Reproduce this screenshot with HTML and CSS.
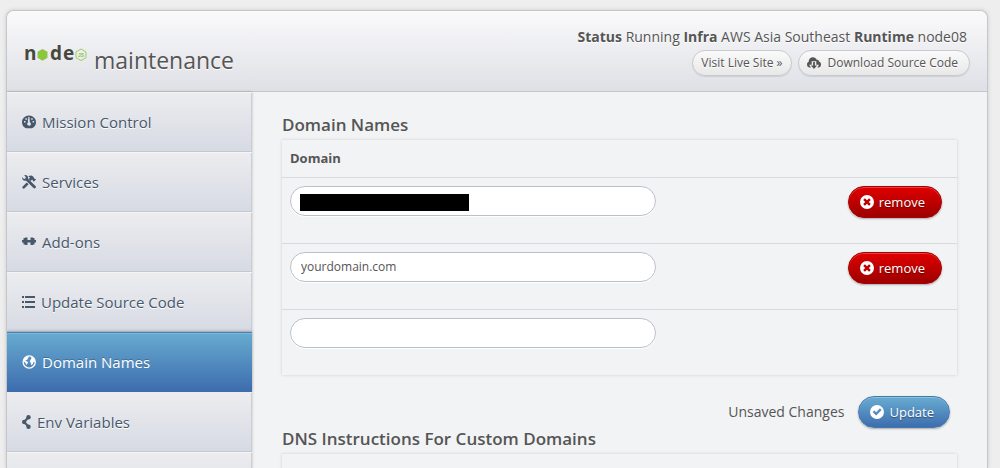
FILE: index.html
```html
<!DOCTYPE html>
<html lang="en">
<head>
<meta charset="utf-8">
<title>maintenance – Domain Names</title>
<link rel="stylesheet" href="styles.css">
</head>
<body>
<svg class="defs" aria-hidden="true">
  <symbol id="i-remove" viewBox="0 0 14 14"><path fill-rule="evenodd" d="M7 0a7 7 0 1 0 0 14A7 7 0 0 0 7 0zM4.9 3.2 7 5.2l2.1-2 1.7 1.7L8.800 7l2 2.100-1.700 1.700L7 8.800l-2.100 2-1.700-1.700L5.200 7l-2-2.100z"/></symbol>
  <symbol id="i-check" viewBox="0 0 14 14"><path fill-rule="evenodd" d="M7 0a7 7 0 1 0 0 14A7 7 0 0 0 7 0zM9.900 3.300l1.700 1.700-5.400 5.600L2.600 7.100l1.700-1.700 1.900 1.800z"/></symbol>
</svg>
<div class="panel">
  <header class="header">
    <div class="brand">
      <svg class="logo" viewBox="0 0 64 28" role="img" aria-label="node.js">
        <g class="logo-word"><text x="0" y="19">n</text><text x="26" y="19">d</text><text x="39" y="19">e</text></g>
        <path fill="#8cc63f" d="M18.500 8l5 2.800v6l-5 2.900-5-2.900v-6z"/>
        <path fill="none" stroke="#9bcf5c" d="M57 8l5 2.900v5.800l-5 2.900-5-2.900v-5.800z"/>
        <text class="logo-js" x="54" y="16">JS</text>
      </svg>
      <h1 class="title">maintenance</h1>
    </div>
    <div class="info">
      <p class="status"><b>Status</b> Running <b>Infra</b> AWS Asia Southeast <b>Runtime</b> node08</p>
      <div class="links">
        <a class="pill" href="#">Visit Live Site »</a>
        <a class="pill pill-icon" href="#">
          <svg class="cloud" viewBox="0 0 14 12"><path fill-rule="evenodd" d="M3 10.500C1.200 10.500 0 9.200 0 7.500c0-1.300.7-2.300 1.700-2.700C1.600 2 3.500.3 5.900.3c1.900 0 3.200 1 3.800 2.500 1.300-.3 2.300.6 2.300 1.700 1.200.3 2 1.500 2 2.900 0 1.700-1.100 3.100-2.700 3.100h-.9L12 7.700H9.300V4.200H4.700v3.500H2l2.100 2.800z"/><path d="M6.100 5h1.800v3.500h2.200L7 12 3.900 8.500h2.200z"/></svg>
          Download Source Code</a>
      </div>
    </div>
  </header>
  <div class="body">
    <nav class="nav">
      <a class="item" href="#"><svg class="icon" viewBox="0 0 14 14"><path fill-rule="evenodd" d="M7 .5C3.100.5 0 3.500 0 7.200c0 2.500 1.200 4.400 3 5.600.4.300.7.400 1.200.4h5.600c.5 0 .8-.1 1.200-.4 1.800-1.200 3-3.100 3-5.600C14 3.500 10.900.5 7 .5zM2 6h1.500v1.500H2zm1.400-2.700h1.500v1.500H3.400zM6.300 2h1.200l.3 5.300c1 .4 1.400 1.300 1.100 2.200-.5 1.600-2.900 1.700-3.600.1-.4-1 0-1.900.9-2.300L5.700 4.500l.6-.3zM9.200 3.300h1.500v1.500H9.200zM10.600 6h1.500v1.500h-1.500z"/></svg>Mission Control</a>
      <a class="item" href="#"><svg class="icon" viewBox="0 0 14 14"><path d="M.2 2.200 2 3.900l1.500-.3.300-1.500L2.200.3c1.800-.6 3.900.3 4 2.700l-.1.700 7.400 7.300c1.300 1.300-.6 3.300-2 2L4.200 5.700c-2.400.7-4.400-1-4-3.500z"/><path d="M6.300 1.500C8.200.2 9.900.3 11 1.400l.9 1 .1 1.100 1.200.2.800.8-2.200 2.300-1-1-.1-1-1.100.1-1.100 1.100-1.900-1.900L8 2.800c-.5-.6-1-1-1.700-1.300zM4.700 7.400l1.900 1.900-4 4c-1.300 1.300-3.200-.6-1.900-1.900z"/></svg>Services</a>
      <a class="item" href="#"><svg class="icon" viewBox="0 0 14 14"><path d="M0 5h1.500V3H3v-.5h2.500V5h3V2.500H11V3h1.500v2H14v2.500h-1.500v2H11v.5H8.500V7.500h-3V10H3v-.5H1.500v-2H0z"/></svg>Add-ons</a>
      <a class="item" href="#"><svg class="icon icon-list" viewBox="0 0 13 14"><path d="M0 1h2v2H0zm3 0h10v2H3zM0 6h2v2H0zm3 0h10v2H3zM0 11h2v2H0zm3 0h10v2H3z"/></svg>Update Source Code</a>
      <a class="item active" href="#" aria-current="page"><svg class="icon" viewBox="0 0 14 14"><circle cx="7.200" cy="7" r="6.100" fill="none" stroke="currentColor" stroke-width="1.300"/><path d="M2 4 4.200 1.700l2.500-.4.100 1.200-1.300.5.600.9-1.900 1.300-1 .7 1.600.3 1.400 1-.8 1.300-.6 1.500L3.700 8.500 2.600 7 1.500 6.300zM8.300 5l1.100-1.500L9 2.300l1.500-.4 2.200 2.400.3 3-1.500-.6-.5 2-1.500 1.700-.8-2.700-1-1.200z"/></svg>Domain Names</a>
      <a class="item" href="#"><svg class="icon icon-share" viewBox="0 0 9 14"><path fill="none" stroke="currentColor" stroke-width="2" d="M6.500 2.300 2 7l4.500 4.500"/><circle cx="6.500" cy="2.300" r="2.200"/><circle cx="2.200" cy="7" r="2.200"/><circle cx="6.500" cy="11.700" r="2.200"/></svg>Env Variables</a>
      <a class="item" href="#" aria-label="More"></a>
    </nav>
    <main class="main">
      <h2 class="heading">Domain Names</h2>
      <form>
        <table class="box">
          <thead><tr><th colspan="2" scope="col">Domain</th></tr></thead>
          <tbody>
            <tr>
              <td><div class="field"><input class="input" type="text" aria-label="Domain 1"><span class="redaction"></span></div></td>
              <td class="action"><button class="btn red" type="button"><svg class="icon" viewBox="0 0 14 14"><use href="#i-remove"/></svg>remove</button></td>
            </tr>
            <tr>
              <td><input class="input" type="text" value="yourdomain.com" aria-label="Domain 2"></td>
              <td class="action"><button class="btn red" type="button"><svg class="icon" viewBox="0 0 14 14"><use href="#i-remove"/></svg>remove</button></td>
            </tr>
            <tr>
              <td><input class="input" type="text" aria-label="New domain"></td>
              <td class="action"></td>
            </tr>
          </tbody>
        </table>
        <div class="save">
          <span>Unsaved Changes</span>
          <button class="btn blue" type="submit"><svg class="icon" viewBox="0 0 14 14"><use href="#i-check"/></svg>Update</button>
        </div>
      </form>
      <h2 class="heading">DNS Instructions For Custom Domains</h2>
      <div class="box instructions"></div>
    </main>
  </div>
</div>
</body>
</html>
```
FILE: styles.css
```css
* { box-sizing: border-box; }
body {
  margin: 0;
  height: 100vh;
  overflow: hidden;
  padding: 10px 12px 0 6px;
  background: #eeeeee;
  color: #555;
  font: 13px/20px "Open Sans", "Noto Sans", sans-serif;
}
h1, h2, p { margin: 0; }
a { color: inherit; text-decoration: none; }
svg { fill: currentColor; flex: none; }
.defs { display: none; }
.panel {
  border: 1px solid #c4c6cb;
  border-bottom: 0;
  border-radius: 8px 8px 0 0;
  max-height: 100%;
  background: #f2f3f5;
  box-shadow: 0 0 4px rgba(0, 0, 0, .15);
  overflow: hidden;
}
.header {
  display: flex;
  justify-content: space-between;
  height: 81px;
  padding: 16px 17px 0;
  border-bottom: 1px solid #c4c6cb;
  background: linear-gradient(#fafafb, #dfe0e6);
  text-shadow: 0 1px 0 #fff;
}
.brand { display: flex; gap: 6px; padding-top: 14px; }
.logo { width: 64px; height: 28px; overflow: visible; text-shadow: none; }
.logo-word { font: 700 19px "Open Sans", sans-serif; fill: #46483e; }
.logo-js { font: 700 5px "Liberation Sans", sans-serif; fill: #8cc63f; }
.title { font-size: 23px; font-weight: 400; line-height: 38px; }
.info { display: flex; flex-direction: column; align-items: flex-end; }
.status { padding-right: 3px; font-size: 14px; }
.links { display: flex; align-items: center; gap: 6px; margin-top: 3px; }
.pill {
  display: flex;
  align-items: center;
  gap: 7px;
  padding: 1px 8px;
  border: 1px solid #c8cace;
  border-radius: 13px;
  background: linear-gradient(#fafafa, #e8e8e8);
  font-size: 12px;
  line-height: 22px;
  box-shadow: 0 1px 1px rgba(0, 0, 0, .1);
}
.pill-icon { padding: 1px 11px 1px 8px; }
.cloud { width: 14px; height: 12px; }
.body { display: flex; }
.nav {
  flex: 0 0 245px;
  box-shadow: 0 0 3px rgba(0, 0, 0, .2);
  color: #47586b;
  text-shadow: 0 1px 0 #fff;
}
.item {
  display: flex;
  align-items: center;
  gap: 6px;
  height: 60px;
  padding: 1px 15px 0;
  border-bottom: 1px solid #c4c8cf;
  background: linear-gradient(#ededf0, #d6dae3);
  box-shadow: inset 0 1px 0 #f5f5f7, inset -1px 0 0 #cacdd3;
  font-size: 15px;
}
.icon { width: 14px; height: 14px; }
.icon-list { width: 13px; }
.icon-share { width: 9px; }
.active {
  position: relative;
  background: linear-gradient(#68acd1, #3d6dae);
  border-bottom-color: #3d6dae;
  box-shadow: 0 -1px 3px rgba(0, 0, 0, .2), inset 0 1px 0 #4a80b4, inset 0 2px 0 #7ab9da;
  color: #fff;
  text-shadow: 0 -1px 0 rgba(0, 0, 0, .25);
}
.main { flex: 1; padding: 23px 30px 0; }
.heading { margin-bottom: 5px; font-size: 17px; font-weight: 600; line-height: 20px; }
.box {
  width: 100%;
  border-collapse: collapse;
  box-shadow: 0 0 3px rgba(0, 0, 0, .15);
}
.box th { height: 37px; padding: 0 8px; text-align: left; }
.box td { height: 66px; padding: 8px; border-top: 1px solid #d8dade; vertical-align: top; }
.box .action { width: 110px; padding-right: 15px; }
.field { position: relative; }
.input {
  display: block;
  width: 66%;
  min-width: 366px;
  height: 30px;
  padding: 0 10px;
  border: 1px solid #bbbfc9;
  border-radius: 15px;
  background: #fff;
  box-shadow: 0 1px 0 #fff;
  color: #555;
  font: 12px/20px "Open Sans", "Noto Sans", sans-serif;
}
.redaction { position: absolute; left: 10px; top: 8px; width: 169px; height: 17px; background: #000; }
.btn {
  display: flex;
  align-items: center;
  gap: 5px;
  height: 32px;
  margin-left: auto;
  padding: 0 15px 0 11px;
  border: 1px solid;
  border-radius: 16px;
  color: #fff;
  font: 13px/20px "Open Sans", "Noto Sans", sans-serif;
  text-shadow: 0 1px 1px rgba(0, 0, 0, .4);
  box-shadow: 0 1px 2px rgba(0, 0, 0, .3), inset 0 1px 0 rgba(255, 255, 255, .25);
}
.red { padding-right: 16px; border-color: #a80000; background: linear-gradient(#e00000, #9c0000); }
.blue { margin-left: 0; border-color: #4479ad; background: linear-gradient(#68acd1, #3d6dae); }
.save {
  display: flex;
  justify-content: flex-end;
  align-items: center;
  gap: 14px;
  margin: 21px 7px 1px 0;
  font-size: 14px;
}
.instructions { height: 120px; }
```
